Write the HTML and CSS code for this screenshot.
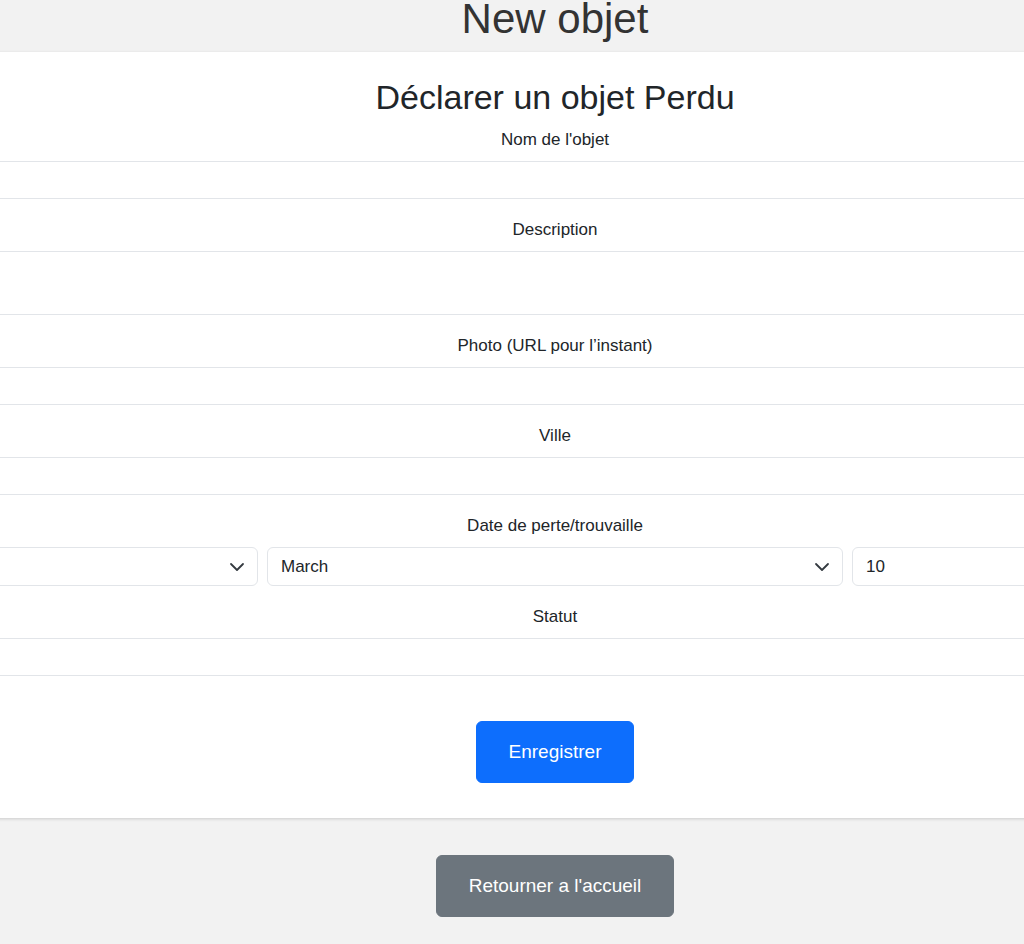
FILE: index.html
```html
<!DOCTYPE html>
<html lang="fr">
<head>
<meta charset="utf-8">
<title>New objet</title>
<link rel="stylesheet" href="styles.css">
</head>
<body>
<div class="page">
  <h1 class="page-title">New objet</h1>
  <div class="card">
    <h2 class="card-title">Déclarer un objet Perdu</h2>
    <form class="form">
      <div class="group">
        <label class="label">Nom de l'objet</label>
        <div class="input"></div>
      </div>
      <div class="group">
        <label class="label">Description</label>
        <div class="input textarea"></div>
      </div>
      <div class="group">
        <label class="label">Photo (URL pour l’instant)</label>
        <div class="input"></div>
      </div>
      <div class="group">
        <label class="label">Ville</label>
        <div class="input"></div>
      </div>
      <div class="group">
        <label class="label">Date de perte/trouvaille</label>
        <div class="date-row">
          <div class="select"><span></span><svg class="chev" width="16" height="16" viewBox="0 0 16 16"><path d="m2 5 6 6 6-6" fill="none" stroke="#343a40" stroke-width="1.8" stroke-linecap="round" stroke-linejoin="round"/></svg></div>
          <div class="select"><span>March</span><svg class="chev" width="16" height="16" viewBox="0 0 16 16"><path d="m2 5 6 6 6-6" fill="none" stroke="#343a40" stroke-width="1.8" stroke-linecap="round" stroke-linejoin="round"/></svg></div>
          <div class="select"><span>10</span><svg class="chev" width="16" height="16" viewBox="0 0 16 16"><path d="m2 5 6 6 6-6" fill="none" stroke="#343a40" stroke-width="1.8" stroke-linecap="round" stroke-linejoin="round"/></svg></div>
        </div>
      </div>
      <div class="group">
        <label class="label">Statut</label>
        <div class="input"></div>
      </div>
      <div class="actions">
        <button type="button" class="btn btn-primary">Enregistrer</button>
      </div>
    </form>
  </div>
  <a class="btn btn-secondary">Retourner a l'accueil</a>
</div>
</body>
</html>
```

FILE: styles.css
```css
html {
  overflow-x: hidden;
}

body {
  margin: 0;
  background: #f2f2f2;
  color: #212529;
  font-family: "Liberation Sans", Arial, sans-serif;
  overflow-x: hidden;
}

.page {
  width: 1110px;
  display: flex;
  flex-direction: column;
  align-items: center;
}

.page-title {
  margin: 0 0 14px;
  font-size: 42px;
  line-height: 38px;
  font-weight: 400;
  color: #333;
  text-align: center;
}

.card {
  width: 1746px;
  flex: none;
  box-sizing: content-box;
  padding: 25px 24px 35.5px;
  background: #fff;
  box-shadow: 0 1px 3px rgba(0, 0, 0, 0.16);
}

.card-title {
  margin: 0 0 8px;
  font-size: 34px;
  line-height: 41px;
  font-weight: 400;
  text-align: center;
}

.form {
  display: flex;
  flex-direction: column;
}

.group {
  display: flex;
  flex-direction: column;
  margin-bottom: 17px;
}

.label {
  display: block;
  font-size: 17px;
  line-height: 24px;
  padding-top: 2px;
  margin-bottom: 9px;
  text-align: center;
}

.input {
  height: 38px;
  box-sizing: border-box;
  border: 1px solid #e2e5e9;
  border-radius: 6px;
  background: #fff;
}

.textarea {
  height: 64px;
}

.date-row {
  display: flex;
  gap: 9px;
}

.select {
  flex: 1 1 0;
  height: 39px;
  box-sizing: border-box;
  border: 1px solid #e2e5e9;
  border-radius: 6px;
  padding: 0 12px 0 13px;
  display: flex;
  align-items: center;
  justify-content: space-between;
  font-size: 17px;
  color: #212529;
}

.chev {
  display: block;
}

.actions {
  display: flex;
  justify-content: center;
  margin-top: 28px;
}

.btn {
  display: inline-block;
  font-family: inherit;
  font-size: 19px;
  line-height: 28.5px;
  padding: 15.5px 31.5px;
  border: 1px solid transparent;
  border-radius: 6px;
  color: #fff;
  text-align: center;
  cursor: pointer;
}

.btn-primary {
  background: #0d6efd;
  border-color: #0d6efd;
}

.btn-secondary {
  margin-top: 37px;
  background: #6c757d;
  border-color: #6c757d;
}
```
